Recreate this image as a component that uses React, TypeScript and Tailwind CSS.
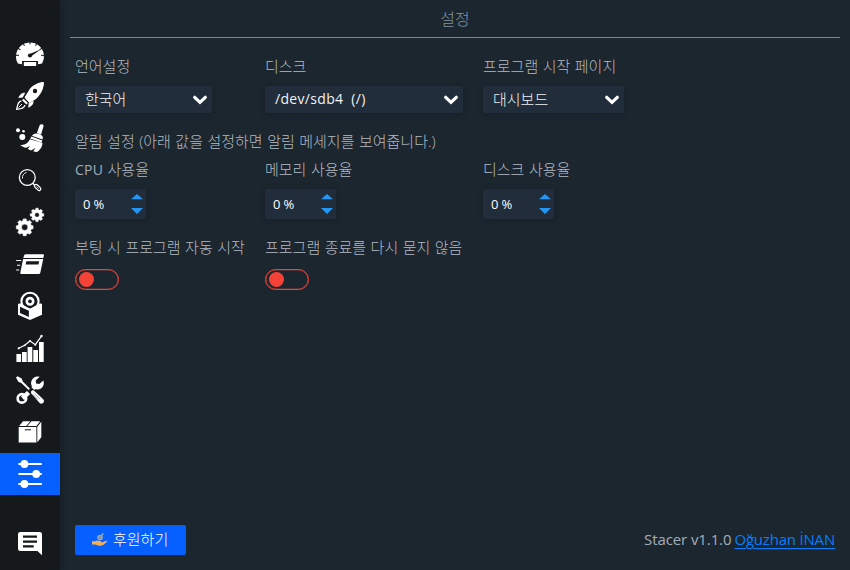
import type { ReactNode } from "react";

const DARK = "#16191c";

function gearPath(cx: number, cy: number, outer: number, inner: number, hole: number, teeth: number) {
  const points: string[] = [];
  const step = (Math.PI * 2) / teeth;
  for (let i = 0; i < teeth; i++) {
    const a = i * step - Math.PI / 2;
    const corners: [number, number][] = [
      [a - step * 0.32, inner],
      [a - step * 0.22, outer],
      [a + step * 0.22, outer],
      [a + step * 0.32, inner],
    ];
    for (const [t, r] of corners) {
      points.push(`${(cx + r * Math.cos(t)).toFixed(2)} ${(cy + r * Math.sin(t)).toFixed(2)}`);
    }
  }
  return `M${points.join("L")}ZM${cx - hole} ${cy}a${hole} ${hole} 0 1 0 ${hole * 2} 0a${hole} ${hole} 0 1 0 ${-hole * 2} 0Z`;
}

function Icon({ children }: { children: ReactNode }) {
  return (
    <svg width="28" height="28" viewBox="0 0 28 28" fill="#fff" className="block overflow-visible">
      {children}
    </svg>
  );
}

const gaugeTicks = [-90, -60, -30, 0, 30, 60, 90];

const Gauge = () => (
  <Icon>
    <path d="M1.9 23.6A14 14 0 1 1 26.1 23.6L22 24.2V21H6v3.2Z" />
    {gaugeTicks.map((a) => (
      <path key={a} d="M14 1v3.3" stroke={DARK} strokeWidth="1" transform={`rotate(${a} 14 15.3)`} />
    ))}
    <path d="M14.8 16.4 25 9.2 13.2 14.200Z" fill={DARK} />
    <circle cx="14" cy="15.5" r="2.1" fill={DARK} />
    <path d="M7 21h14v5H7z" fill={DARK} />
    <rect x="7.800" y="22" width="12.400" height="4" rx=".5" />
  </Icon>
);

const Rocket = () => (
  <Icon>
    <path d="M27.8.1C21.5.6 16.5 3.300 13 8.200L8.600 15.600 13 20l6.500-4.400C24.800 11.500 27.600 6.500 27.800.1Z" />
    <path d="M27.7.3C21.300 1 16.500 4 13.200 8.500L8.800 15.600l4.500 5.500 6.700-4.200C25.500 12 27.700 6.500 27.700.3Z" />
    <circle cx="19" cy="9" r="2.2" fill={DARK} />
    <path d="M9.300 10.700C5.500 10.400 3.900 12.700 2.200 16l4.500-.4ZM17.500 18.700c.3 3.800-2 5.400-5.300 7.100l.5-4.500Z" />
    <path d="m7.600 16.700 4.300 4.300-1.500 1.600-4.400-4.400Z" />
    <path d="M5.300 19C1.500 19.700 1.500 23.500.7 27.300 4.500 26.800 8.300 26.700 9 23" fill="none" stroke="#fff" strokeWidth="1.300" />
    <path d="m2.500 25.500 3.500-3.500" stroke="#fff" strokeWidth="1" />
  </Icon>
);

const Broom = () => (
  <Icon>
    <path d="M23.700 1.200c.8-1.500 4-1 3.900.8l-2.500 8.500-4.200-1.500Z" />
    <path d="M17.200 10.500c2.200-2.200 9-.3 9.700 2.700l-.4 2.200-10.600-3.700Z" />
    <path d="m15.500 12.600 10.800 3.800-.8 2.100-11.300-4Z" />
    <path d="M13.900 15.300 26.400 18.800c.2 3.500-2 7.200-5.500 9.200-1.500-.1-2.500-.4-3.700-.8l2.200-3.200-4.400 2.600c-1.300-.4-2.200-1-3.200-1.800l2.400-2.800-3.900 1.800c-2.400-.6-4.300-1.600-6-2.900 4.500.6 7.600-1.600 9.600-5.600Z" />
    <circle cx="2" cy="6.300" r="2" />
    <circle cx="7.500" cy="7.300" r="1.300" />
    <circle cx="6.300" cy="13" r="3" />
  </Icon>
);

const Search = () => (
  <Icon>
    <g fill="none" stroke="#fff">
      <circle cx="11.300" cy="11.500" r="7.900" strokeWidth="1.300" />
      <path d="M6.500 12.500a5.200 5.200 0 0 1 4-6" strokeWidth=".9" />
      <path d="m16.700 17.300 2 2" strokeWidth="1.500" />
      <rect x="18" y="19.700" width="7.300" height="3.400" rx="1.600" strokeWidth="1.200" transform="rotate(43 21.600 21.400)" />
      <path d="m20.500 20.400 2.300 2.200" strokeWidth=".8" />
    </g>
  </Icon>
);

const Gears = () => (
  <Icon>
    <path fillRule="evenodd" stroke="#fff" strokeWidth=".6" strokeLinejoin="round" d={gearPath(8.7, 19.3, 8.5, 6.8, 3.2, 8)} />
    <path fillRule="evenodd" stroke="#fff" strokeWidth=".6" strokeLinejoin="round" d={gearPath(21, 6.9, 6.8, 5.3, 2.4, 8)} />
  </Icon>
);

const Startup = () => (
  <Icon>
    <path d="M9.700 4.200h17.400c.8 0 1 .5.8 1.200L27.300 8H7.300L8.200 5.200q.3-1 1.500-1Z" />
    <path fillRule="evenodd" d="M7.100 8.900h20.100l-2.900 13.900q-.3 1.200-1.600 1.200H5.300q-1.300 0-1-1.200ZM10.400 11.200l-.8 3.400h12.800l.8-3.400Z" />
    <path d="M.2 10.500h5M1 15.300h3.200M.2 20h3" stroke="#fff" strokeWidth="1.100" />
  </Icon>
);

const Uninstaller = () => (
  <Icon>
    <circle cx="14" cy="9.300" r="8.600" fill="none" stroke="#fff" strokeWidth="2.100" />
    <circle cx="14" cy="9.300" r="3.200" fill="none" stroke="#fff" strokeWidth="2.600" />
    <path d="m2 12.200 2-1 10 5.500 10-5.500 2 1v10.500L14 28.100 2 22.700Z" />
    <path d="m4 14.700 8.900 4v6.300L4 21Z" fill={DARK} />
    <path d="m2.700 12.200 11.300 5.300 11.300-5.300" fill="none" stroke="#fff" strokeWidth="1" />
  </Icon>
);

const Resources = () => (
  <Icon>
    <path d="M.4 20h4.700v8H.4zM6 18h4.700v10H6zM11.600 13h4.700v15h-4.700zM17.300 16H22v12h-4.700zM23 8h4.700v20H23z" />
    <path d="m2.700 14.300 6-3L14 7l5.300 3.700 6-8.400" fill="none" stroke="#fff" strokeWidth="1.200" />
    <circle cx="2.700" cy="14.300" r="1.100" />
    <circle cx="8.700" cy="11.300" r=".9" />
    <circle cx="14" cy="7" r="1" />
    <circle cx="19.300" cy="10.700" r="1" />
    <circle cx="25.500" cy="2" r="1.200" />
  </Icon>
);

const Tools = () => (
  <Icon>
    <path d="m5 20.500 13-12 3 3L8 24Z" />
    <circle cx="5.900" cy="22.400" r="4.200" fill="none" stroke="#fff" strokeWidth="2.700" />
    <path d="M23.600.8 19.700 4.600l.4 3 3.200.5 4-3.700c1.300 3.300.1 6.300-2.300 8-2.500 1.600-6.300 1.200-8.200-.9-2.200-2.200-2.300-5.700-.5-8.200C18 .7 20.500-.2 23.600.8Z" />
    <path d="m11.500 12.800 3-2.600 13.200 13.300c1.500 3.500-2 5.500-4.600 3.700L10.800 14.800" fill={DARK} />
    <path d="m1.500.2 4.200 2.400 1.100 3L14 12.700 12.600 14 5.300 7.100l-3-1.300L0 1.500Z" />
    <path d="m16.200 14.300 1.700.2 9.300 8.800c2.200 2.400-1 6-3.600 3.800l-8.300-9.600-.4-1.700Z" />
    <path d="m18.800 17.600 5 5.500M17 18.500l4.500 5" stroke={DARK} strokeWidth=".4" />
  </Icon>
);

const Packages = () => (
  <Icon>
    <path d="M2.700 8.900h17.700v15.500H2.700zM7 3.300h7.300l-4.100 4.600h-7ZM15.500 3.300h8.700l-3.700 4.600h-9.200ZM21.300 8.700 25.300 3.800v15.500l-4 5Z" />
    <path d="M8.800 11.800H15" stroke={DARK} strokeWidth="1" />
  </Icon>
);

const Sliders = () => (
  <Icon>
    <path d="M3.200 4H25M3.200 14H25M3.200 24H25" stroke="#fff" strokeWidth="2.100" strokeLinecap="round" />
    <circle cx="8.400" cy="4" r="3.900" />
    <circle cx="20.200" cy="14" r="3.900" />
    <circle cx="8.400" cy="24" r="3.900" />
  </Icon>
);

const Feedback = () => (
  <Icon>
    <path d="M4.300 3h19.400Q26 3 26 5.300v21L21.400 22H4.300Q2 22 2 19.700V5.300Q2 3 4.300 3Z" />
    <path d="M7 7.700h14M7 12.600h14M7 17.300h10.700" stroke={DARK} strokeWidth="2.200" />
  </Icon>
);

const navItems = [Gauge, Rocket, Broom, Search, Gears, Startup, Uninstaller, Resources, Tools, Packages, Sliders];

function Label({ children, className = "" }: { children: ReactNode; className?: string }) {
  return (
    <div className={`h-5 font-light whitespace-nowrap leading-[18px] text-[#b2bac3] [word-spacing:0.6px] ${className}`}>
      {children}
    </div>
  );
}

function Select({ value, className }: { value: ReactNode; className: string }) {
  return (
    <button
      className={`flex h-[27px] items-center justify-between rounded-xs bg-[#212d3a] pr-1 pl-[10px] text-left whitespace-pre text-[#f0f2f4] shadow-[0_1px_7px_rgba(0,0,0,0.2)] ${className}`}
    >
      <span className="pb-0.5 leading-5">{value}</span>
      <svg width="16" height="12" viewBox="0 0 16 12" className="block">
        <path d="m2.700 3.300 5.300 5 5.300-5" fill="none" stroke="#fff" strokeWidth="3.200" strokeLinecap="round" />
      </svg>
    </button>
  );
}

function Spin() {
  return (
    <div className="mt-[9px] flex h-[30px] w-[71px] items-center justify-between rounded-xs bg-[#212d3a] pr-[3px] pl-2 text-[13px] text-white shadow-[0_1px_7px_rgba(0,0,0,0.2)]">
      <span className="pt-px tracking-[-0.1px]">0 %</span>
      <svg width="12" height="20" viewBox="0 0 12 20" fill="#2196f3">
        <path d="M0 5.200 6 0l6 5.200ZM0 14h12l-6 6Z" />
      </svg>
    </div>
  );
}

function Toggle() {
  return (
    <button className="mt-[11px] flex h-[21px] w-11 items-center rounded-full border border-[#f44336] pl-[3px] shadow-[inset_0_0_0_0.3px_#f44336]">
      <span className="size-[15px] rounded-full bg-[#f44336]" />
    </button>
  );
}

const columns = "grid grid-cols-[190px_218px_1fr]";

export default function App() {
  return (
    <div className="flex h-[570px] w-[850px] overflow-hidden bg-[#1c262f] font-['Open_Sans','Noto_Sans_CJK_KR',sans-serif] text-[15px]">
      <aside className="z-10 flex w-[60px] shrink-0 flex-col bg-[#16191c] pt-[33px] shadow-[0_0_8px_rgba(0,0,0,0.3)]">
        {navItems.map((NavIcon, i) => (
          <button key={i} className={`flex h-[42px] items-center justify-center ${i === 10 ? "bg-[#0560ff]" : ""}`}>
            <NavIcon />
          </button>
        ))}
        <button className="mt-auto mb-[6px] flex h-[42px] items-center justify-center">
          <Feedback />
        </button>
      </aside>
      <main className="flex min-w-0 grow flex-col px-[10px]">
        <h1 className="h-[38px] border-b border-[#778899] pt-2 text-center text-[16px] leading-[22px] font-light text-[#8394a5]">
          설정
        </h1>
        <div className="flex grow flex-col px-[5px] pt-[19px] pb-[15px]">
          <div className={columns}>
            <div>
              <Label>언어설정</Label>
              <Select className="mt-[9px] w-[137px] font-light" value="한국어" />
            </div>
            <div>
              <Label>디스크</Label>
              <Select
                className="mt-[9px] w-[198px]"
                value={<span className="text-[14px] tracking-[0.32px]">{"/dev/sdb4  (/)"}</span>}
              />
            </div>
            <div>
              <Label>프로그램 시작 페이지</Label>
              <Select className="mt-[9px] w-[141px] font-light" value="대시보드" />
            </div>
          </div>
          <Label className="mt-[19px]">알림 설정 (아래 값을 설정하면 알림 메세지를 보여줍니다.)</Label>
          <div className={`mt-2 ${columns}`}>
            <div>
              <Label>
                <span className="text-[14px] font-normal tracking-[0.2px] text-[#a3adb8]">CPU</span> 사용율
              </Label>
              <Spin />
            </div>
            <div>
              <Label>메모리 사용율</Label>
              <Spin />
            </div>
            <div>
              <Label>디스크 사용율</Label>
              <Spin />
            </div>
          </div>
          <div className={`mt-[19px] ${columns}`}>
            <div>
              <Label>부팅 시 프로그램 자동 시작</Label>
              <Toggle />
            </div>
            <div>
              <Label>프로그램 종료를 다시 묻지 않음</Label>
              <Toggle />
            </div>
          </div>
          <footer className="mt-auto flex items-center justify-between">
            <button className="flex h-[30px] w-[111px] items-center rounded-xs bg-[#0560ff] pl-[17px] font-light text-white">
              <svg width="16" height="16" viewBox="0 0 16 16" className="mr-[5px] block">
                <path d="M0 9.300h3l2-.8 3.500.5 1.500 1.500 4-1.700 1.500.4-3.500 3.300-4 1.500L3 12.500H0Z" fill="#f5ae55" />
                <circle cx="8" cy="5.500" r="2.800" fill="#98a9b5" />
                <path d="m8.800 3.700 1.500-2.400 1.500-.3-.8 2.200-1.300 1Z" fill="#98a9b5" />
                <path d="M8 4v3" stroke="#5f7384" strokeWidth=".8" />
              </svg>
              <span className="pb-0.5">후원하기</span>
            </button>
            <div className="flex pb-0.5 text-[15px] whitespace-nowrap text-[#a3adb8]">
              <span className="mr-[3px] tracking-[-0.1px]">Stacer v1.1.0</span>
              <a className="tracking-[-0.2px] text-[#007fff] underline underline-offset-3">Oğuzhan İNAN</a>
            </div>
          </footer>
        </div>
      </main>
    </div>
  );
}
